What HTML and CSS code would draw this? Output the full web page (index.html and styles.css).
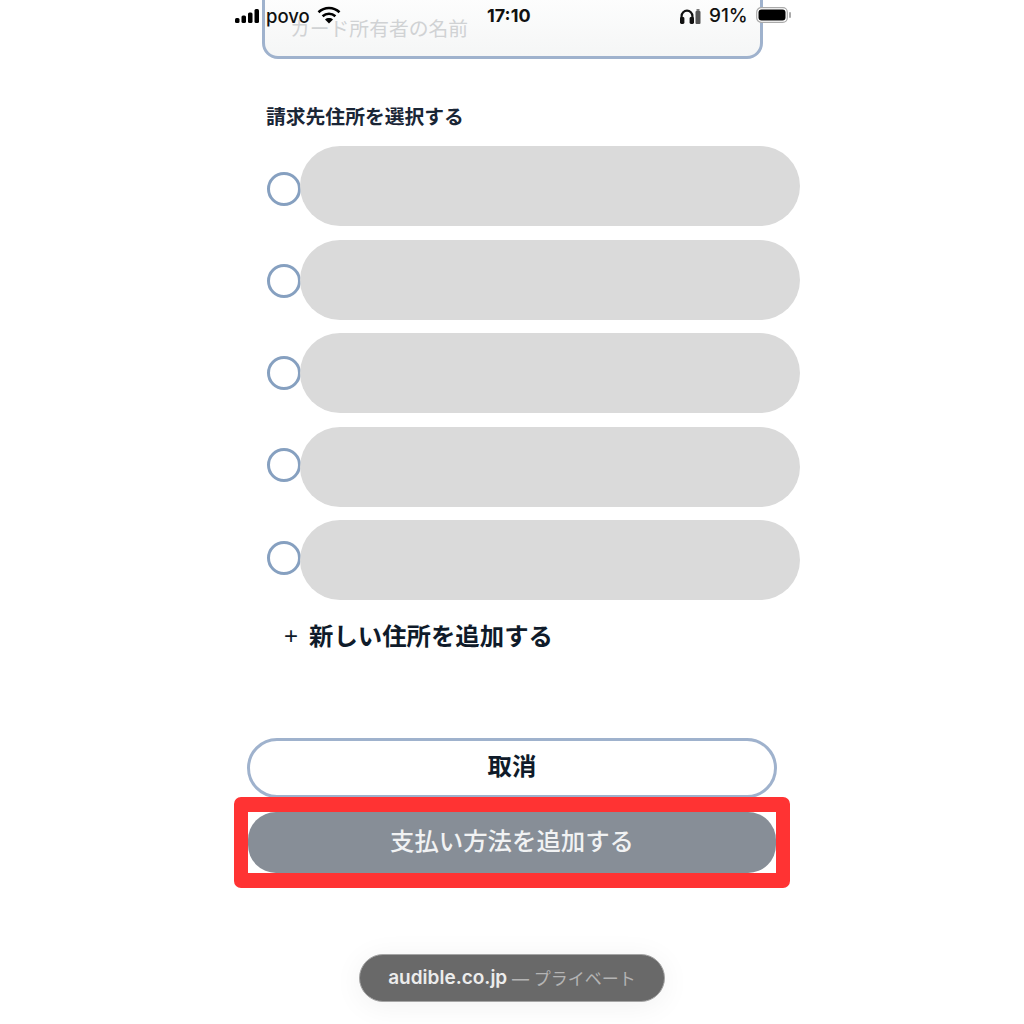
FILE: index.html
```html
<!DOCTYPE html>
<html lang="ja">
<head>
<meta charset="utf-8">
<title>支払い方法を追加する</title>
<link rel="stylesheet" href="styles.css">
</head>
<body>
<div class="page">
  <div class="status">
    <svg class="signal" width="25" height="14" viewBox="0 0 25 14"><rect x="0" y="9" width="4.5" height="5" rx="1.5"/><rect x="6.5" y="6.5" width="4.5" height="7.5" rx="1.5"/><rect x="13" y="3.5" width="4.5" height="10.5" rx="1.5"/><rect x="19.5" y="0" width="4.5" height="14" rx="1.5"/></svg>
    <span class="carrier">povo</span>
    <svg class="wifi" width="24" height="18" viewBox="0 0 24 18" fill="none" stroke="#000" stroke-width="2.6"><path d="M1.5 6.2C7.5 .6 16.5 .6 22.5 6.2"/><path d="M5.6 10.2C9.3 6.9 14.7 6.9 18.4 10.2"/><path d="M12 17.5 8 13.4C10.3 11.6 13.7 11.6 16 13.4Z" fill="#000" stroke="none"/></svg>
    <span class="time">17:10</span>
    <svg class="phones" width="14" height="15" viewBox="0 0 14 15" fill="none" stroke="#111" stroke-width="2.2"><path d="M1.6 11V7a5.4 5.4 0 0 1 10.8 0v4"/><rect x="0" y="8" width="4.4" height="7" rx="1.4" fill="#111" stroke="none"/><rect x="9.6" y="8" width="4.4" height="7" rx="1.4" fill="#111" stroke="none"/></svg>
    <svg class="minibat" width="6" height="15" viewBox="0 0 6 15"><rect x="1.5" y="0" width="3" height="2" fill="#777"/><rect x=".5" y="2" width="5" height="13" rx="1" fill="#555"/></svg>
    <span class="percent">91%</span>
    <svg class="battery" width="35" height="16" viewBox="0 0 35 16"><rect x=".7" y=".7" width="30.6" height="14.6" rx="4.5" fill="#fff" stroke="#aaa" stroke-width="1.2"/><rect x="2.5" y="2.5" width="27" height="11" rx="3" fill="#000"/><rect x="33" y="5" width="2" height="6" rx="1" fill="#aaa"/></svg>
  </div>

  <div class="form">
    <div class="name-input">カード所有者の名前</div>
    <h2 class="section-title">請求先住所を選択する</h2>
    <div class="addresses">
      <div class="address"><span class="radio r1"></span><div class="pill"></div></div>
      <div class="address"><span class="radio r2"></span><div class="pill"></div></div>
      <div class="address"><span class="radio r3"></span><div class="pill"></div></div>
      <div class="address"><span class="radio r4"></span><div class="pill"></div></div>
      <div class="address"><span class="radio r5"></span><div class="pill"></div></div>
    </div>
    <div class="add-address"><span class="plus">+</span><span>新しい住所を追加する</span></div>
  </div>

  <div class="actions">
    <button class="btn cancel">取消</button>
    <div class="highlight"><button class="btn submit">支払い方法を追加する</button></div>
  </div>

  <div class="toast"><span class="domain">audible.co.jp</span><span class="private"> — プライベート</span></div>
</div>
</body>
</html>
```

FILE: styles.css
```css
* { box-sizing: border-box; }
html, body { margin: 0; padding: 0; background: #fff; }
body { font-family: "Inter", "Noto Sans CJK JP", "Liberation Sans", sans-serif; color: #0f1b2a; }
.page { position: relative; width: 1024px; height: 1024px; overflow: hidden; background: #fff; }

.status { position: absolute; top: 0; left: 0; width: 100%; height: 31px; display: flex; align-items: center; padding-left: 235px; color: #111; }
.signal { margin-top: 1px; }
.carrier { margin-left: 6px; font-size: 18.5px; font-weight: 500; }
.wifi { margin-left: 7px; margin-top: -1px; }
.time { position: absolute; left: 487px; font-size: 18px; font-weight: 700; }
.phones { position: absolute; left: 680px; top: 9px; }
.minibat { position: absolute; left: 695px; top: 9px; }
.percent { position: absolute; left: 709px; font-size: 19px; font-weight: 500; }
.battery { position: absolute; left: 756px; top: 7px; }

.form { display: flex; flex-direction: column; padding-left: 262px; }
.name-input { width: 501px; height: 79px; margin-top: -20px; padding: 33px 0 0 25px; border: 3px solid #9fb2cd; border-radius: 16px; background: linear-gradient(#fff, #f5f6f6); color: #d0d2d4; font-size: 19.8px; line-height: 26px; }
.section-title { margin: 45px 0 0 4px; font-size: 19.8px; line-height: 26px; font-weight: 700; color: #1a2636; }
.addresses { display: flex; flex-direction: column; gap: 13.5px; margin-top: 16px; margin-left: 5px; }
.address { display: flex; align-items: flex-start; height: 80px; }
.radio { position: relative; flex: none; width: 34px; height: 34px; border: 3px solid #86a0c0; border-radius: 50%; background: #fff; margin-right: -1px; z-index: 1; }
.r1 { margin-top: 26px; }
.r2 { margin-top: 24.5px; }
.r3 { margin-top: 23px; }
.r4 { margin-top: 21.5px; }
.r5 { margin-top: 20.5px; }
.pill { width: 500px; height: 80px; border-radius: 40px; background: #dadada; position: relative; z-index: 2; }
.add-address { display: flex; align-items: center; gap: 11px; margin: 18px 0 0 22px; font-size: 24.4px; line-height: 36px; font-weight: 600; color: #0f1b2a; }
.plus { font-size: 24px; font-weight: 400; font-family: "Liberation Sans", sans-serif; }

.actions { display: flex; flex-direction: column; align-items: center; margin-top: 84px; }
.btn { display: block; font-family: inherit; font-size: 24.4px; }
.cancel { width: 530px; height: 60px; padding: 0 0 7px; border: 3px solid #9fb2cd; border-radius: 30px; background: #fff; color: #0f1b2a; font-weight: 700; }
.highlight { width: 556px; height: 91px; margin-top: -1px; border: solid #ff3333; border-width: 15px 14px; border-radius: 7px; background: #fff; }
.submit { width: 100%; height: 100%; padding: 0 0 6px; border: 0; border-radius: 28px; background: #878e97; color: #f1f2f3; font-weight: 500; }

.toast { position: absolute; left: 359px; top: 954px; width: 306px; height: 48px; padding-bottom: 2px; display: flex; align-items: center; justify-content: center; border-radius: 24px; background: #696969; border: 1px solid #a5a5a5; box-shadow: 0 4px 30px rgba(0, 0, 0, .06); white-space: pre; }
.domain { color: #ececec; font-weight: 600; font-size: 19px; }
.private { color: #b4b4b4; font-size: 17px; }
```
